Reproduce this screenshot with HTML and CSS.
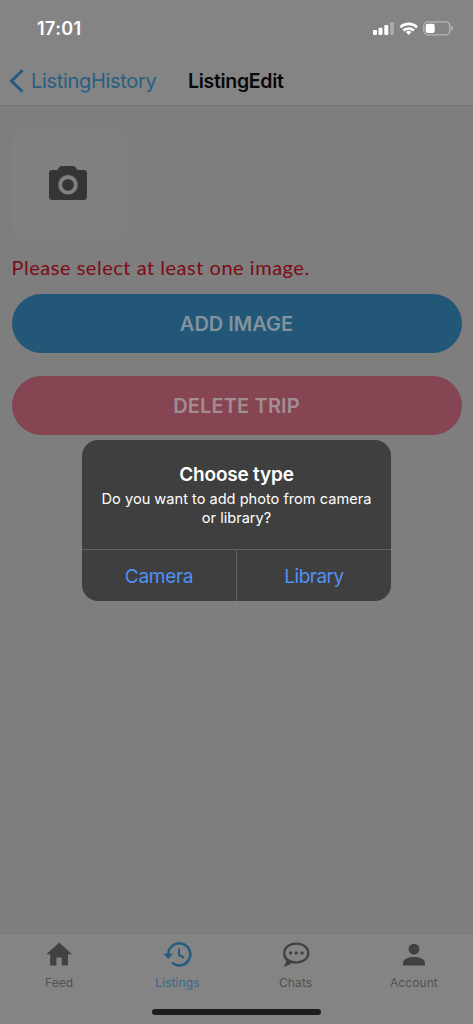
FILE: index.html
```
<!DOCTYPE html>
<html lang="en">
<head>
<meta charset="utf-8">
<title>ListingEdit</title>
<link rel="stylesheet" href="styles.css">
</head>
<body>
<div class="screen">
  <header class="header">
    <div class="status">
      <span class="time">17:01</span>
      <svg class="status-icons" width="84" height="20" viewBox="0 0 84 20">
        <g fill="#fff">
          <rect x="1" y="11" width="4" height="5" rx="1"/>
          <rect x="6.500" y="8.800" width="4" height="7.200" rx="1"/>
          <rect x="12.300" y="6" width="4" height="10" rx="1"/>
          <rect x="18" y="3" width="4" height="13" rx="1" opacity=".3"/>
        </g>
        <g fill="none" stroke="#fff" stroke-width="2.700">
          <path d="M28.300 8.200a12.500 12.500 0 0 1 16.800 0"/>
          <path d="M31.400 11.500a8 8 0 0 1 10.600 0"/>
        </g>
        <path d="M36.700 16l-2.800-2.900a4 4 0 0 1 5.600 0z" fill="#fff"/>
        <rect x="51.800" y="2.800" width="26" height="13" rx="4" fill="none" stroke="#fff" stroke-opacity=".42" stroke-width="1.300"/>
        <rect x="53.700" y="4.700" width="9" height="9.200" rx="2" fill="#fff"/>
        <path d="M79.300 7v4.500q1.700-.6 1.700-2.250T79.300 7z" fill="#fff" opacity=".45"/>
      </svg>
    </div>
    <nav class="nav">
      <svg class="chevron" width="16" height="26" viewBox="0 0 16 26"><path d="M14.500 2.200L3.500 13l11 10.800" fill="none" stroke="#225b83" stroke-width="3"/></svg>
      <span class="back">ListingHistory</span>
      <h1 class="title">ListingEdit</h1>
    </nav>
  </header>

  <main class="content">
    <div class="tile">
      <svg width="40" height="36" viewBox="0 0 40 36">
        <path fill="#363435" fill-rule="evenodd" d="M13.500 1h11.800c.7 0 1.300.3 1.700.8l2.700 3.100h6.200a3 3 0 0 1 3 3v24.200a3 3 0 0 1-3 3H4a3 3 0 0 1-3-3V7.900a3 3 0 0 1 3-3h5.200l2.700-3.100c.4-.5 1-.8 1.600-.8zM20 10a9.800 9.800 0 1 0 0 19.600A9.800 9.800 0 0 0 20 10z"/>
        <circle cx="20" cy="19.800" r="5.900" fill="#363435"/>
      </svg>
    </div>
    <p class="error">Please select at least one image.</p>
    <button class="button add"><span>ADD IMAGE</span></button>
    <button class="button delete"><span>DELETE TRIP</span></button>
  </main>

  <footer class="footer">
    <div class="tabs">
      <div class="tab">
        <svg width="28" height="28" viewBox="0 0 28 28"><path fill="#414141" d="M14.300 2.500L1.300 14.300h3.900v11.200h6.200v-8h5.400v8h6.200V14.300h3.900z"/></svg>
        <span>Feed</span>
      </div>
      <div class="tab active">
        <svg width="30" height="28" viewBox="0 0 30 28"><g fill="none" stroke="#245d80" stroke-width="2.500"><path d="M6.300 15.500V14A11 11 0 1 1 10 22.600"/><path d="M17 8.500v6.200l5 3.100" stroke-width="2"/></g><path d="M1.200 13.500h9.900l-4.950 5.600z" fill="#245d80"/></svg>
        <span>Listings</span>
      </div>
      <div class="tab">
        <svg width="28" height="28" viewBox="0 0 28 28"><path fill="#414141" fill-rule="evenodd" d="M14.300 2.500c7.300 0 13.200 4.300 13.200 10.500S21.600 23.500 14.300 23.500c-1.600 0-3.100-.2-4.500-.6-2.300 2-5.200 3.300-8.400 3.600 1.600-1.800 2.700-3.800 2.600-6C2 18.600 1.100 16 1.100 13 1.100 6.800 7 2.500 14.300 2.500zm0 2.300C8.200 4.800 3.400 8.200 3.400 13s4.800 8.200 10.900 8.200S25.200 17.800 25.200 13 20.400 4.800 14.300 4.800z"/><g fill="#414141"><rect x="7" y="11.500" width="3.100" height="3.100" rx="1"/><rect x="12.750" y="11.500" width="3.100" height="3.100" rx="1"/><rect x="18.500" y="11.500" width="3.100" height="3.100" rx="1"/></g></svg>
        <span>Chats</span>
      </div>
      <div class="tab">
        <svg width="28" height="28" viewBox="0 0 28 28"><circle cx="14" cy="9.200" r="5.500" fill="#414141"/><path fill="#414141" d="M3 25.500v-2.700c0-4 6-5.800 11-5.800s11 1.800 11 5.800v2.700z"/></svg>
        <span>Account</span>
      </div>
    </div>
    <div class="home-indicator"></div>
  </footer>

  <section class="dialog" role="dialog">
    <div class="message">
      <h2>Choose type</h2>
      <p>Do you want to add photo from camera<br>or library?</p>
    </div>
    <div class="actions">
      <button class="action"><span class="camera">Camera</span></button>
      <button class="action"><span class="library">Library</span></button>
    </div>
  </section>
</div>
</body>
</html>
```
FILE: styles.css
```
* { box-sizing: border-box; }
body { margin: 0; font-family: Inter, "Liberation Sans", sans-serif; }
h1, h2, p { margin: 0; }
button { font-family: inherit; border: 0; margin: 0; padding: 0; background: none; }
svg { display: block; flex: none; }

.screen { position: relative; width: 473px; height: 1024px; display: flex; flex-direction: column; background: #7e7e7e; overflow: hidden; }
.header { height: 106px; background: #848484; border-bottom: 1px solid #777; }
.status { height: 54px; padding: 18px 17px 0 37px; display: flex; justify-content: space-between; color: #fff; }
.time { font-size: 18px; line-height: 22px; font-weight: 600; letter-spacing: 0.4px; }
.status-icons { margin-top: 1px; }
.nav { height: 52px; display: flex; align-items: center; padding: 1px 0 0 8px; }
.chevron { margin-right: 7px; }
.back { width: 157px; color: #285f83; font-size: 20px; line-height: 26px; letter-spacing: -0.32px; }
.title { color: #080808; font-size: 19.500px; line-height: 26px; font-weight: 600; letter-spacing: -0.3px; }

.content { flex: 1; padding: 22px 11.500px 0; }
.tile { width: 115px; height: 114px; border-radius: 17px; background: #827f80; display: flex; align-items: center; justify-content: center; padding: 0 2px 4px 0; }
.error { margin-top: 12px; height: 27px; color: #7d0b15; font: 400 20px/26px Lato, sans-serif; white-space: nowrap; letter-spacing: 0.52px; }
.button { display: flex; align-items: center; justify-content: center; width: 450px; height: 59px; border-radius: 30px; font-size: 20px; font-weight: 600; }
.add { margin-top: 13px; background: #225778; color: #83929c; }
.delete { margin-top: 23px; background: #854552; color: #a28e92; letter-spacing: 0.15px; }

.footer { height: 91px; background: #848484; border-top: 1px solid #7a7a7a; display: flex; flex-direction: column; align-items: center; }
.tabs { width: 100%; display: grid; grid-template-columns: repeat(4, 1fr); height: 74px; padding-top: 6px; }
.tab { display: flex; flex-direction: column; align-items: center; color: #525252; font-size: 12px; line-height: 16px; font-weight: 400; letter-spacing: 0.1px; }
.tab span { margin-top: 7px; }
.tab.active { color: #336a8e; }
.home-indicator { width: 169px; height: 6px; margin-top: 1px; border-radius: 3px; background: #1c1c1c; }

.dialog { position: absolute; left: 82px; top: 440px; width: 309px; height: 161px; border-radius: 16px; background: #3f3f3f; overflow: hidden; display: flex; flex-direction: column; color: #fff; text-align: center; }
.message { height: 109px; padding-top: 22px; white-space: nowrap; }
.message h2 { font-size: 19px; line-height: 25px; font-weight: 600; letter-spacing: -0.2px; }
.message p { margin-top: 3px; font-size: 14.600px; line-height: 18.500px; }
.actions { flex: 1; display: grid; grid-template-columns: 154px 1fr; border-top: 1px solid #626262; }
.action { color: #5091f5; font-size: 19px; line-height: 25px; letter-spacing: -0.3px; padding-top: 1px; }
.action + .action { border-left: 1px solid #626262; }
.library { letter-spacing: -0.5px; }
```
